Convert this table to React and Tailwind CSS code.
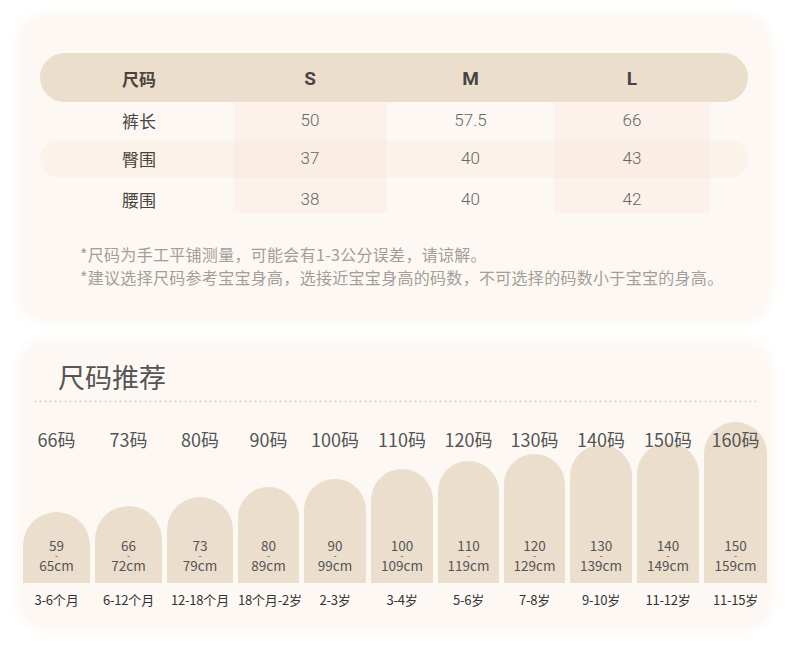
import React from "react";

const rows = [
  { label: "裤长", v: ["50", "57.5", "66"], band: false },
  { label: "臀围", v: ["37", "40", "43"], band: true },
  { label: "腰围", v: ["38", "40", "42"], band: false },
];

const sizes = [
  { s: "66码", a: "59", b: "65cm", age: "3-6个月", h: 71 },
  { s: "73码", a: "66", b: "72cm", age: "6-12个月", h: 77 },
  { s: "80码", a: "73", b: "79cm", age: "12-18个月", h: 86 },
  { s: "90码", a: "80", b: "89cm", age: "18个月-2岁", h: 96 },
  { s: "100码", a: "90", b: "99cm", age: "2-3岁", h: 104 },
  { s: "110码", a: "100", b: "109cm", age: "3-4岁", h: 114 },
  { s: "120码", a: "110", b: "119cm", age: "5-6岁", h: 122 },
  { s: "130码", a: "120", b: "129cm", age: "7-8岁", h: 129 },
  { s: "140码", a: "130", b: "139cm", age: "9-10岁", h: 138 },
  { s: "150码", a: "140", b: "149cm", age: "11-12岁", h: 140 },
  { s: "160码", a: "150", b: "159cm", age: "11-15岁", h: 161 },
];

const cjk = { fontFamily: '"Noto Sans CJK SC", "Noto Sans", sans-serif' };
const num = { fontFamily: 'Roboto, "Noto Sans CJK SC", sans-serif' };

const cols = "grid grid-cols-[67px_67px_66px_61px_62px_62px_61px_61px_62px_62px_63px] gap-x-[5px]";

export default function App() {
  return (
    <div className="w-[790px] h-[657px] bg-white pt-[15px] pl-[20px]" style={cjk}>
      {/* Top card */}
      <div className="w-[750px] h-[306px] rounded-[30px] bg-[#fdf8f3] shadow-[0_0_10px_4px_#fdf9f5] pt-[38px] pl-[20px]">
        <div className="w-[708px]">
          {/* header */}
          <div className="h-[49px] pt-[3px] rounded-full bg-[#ecdecd] flex items-center text-[#4a4440]">
            <div className="w-[193px] pl-[82px] text-[17px] font-bold">尺码</div>
            <div className="w-[154px] text-center text-[19px] font-bold" style={num}>S</div>
            <div className="w-[167px] text-center text-[19px] font-bold" style={num}>M</div>
            <div className="w-[156px] text-center text-[19px] font-bold" style={num}>L</div>
          </div>
          {rows.map((r, i) => (
            <div
              key={r.label}
              className={
                "flex items-stretch " +
                (r.band ? "rounded-full bg-[#fbf2e9] h-[38px]" : i === 2 ? "h-[35px]" : "h-[38px]")
              }
            >
              <div className={"w-[193px] pl-[82px] flex items-center text-[17px] text-[#4a4440] " + (i === 2 ? "pt-[8px]" : "")}>
                {r.label}
              </div>
              <div className={"w-[154px] flex items-center justify-center text-[17px] font-light text-[#666] bg-[#f9e9dc]/35 " + (i === 2 ? "pt-[8px]" : "")} style={num}>
                {r.v[0]}
              </div>
              <div className={"w-[167px] flex items-center justify-center text-[17px] font-light text-[#666] " + (i === 2 ? "pt-[8px]" : "")} style={num}>
                {r.v[1]}
              </div>
              <div className={"w-[156px] flex items-center justify-center text-[17px] font-light text-[#666] bg-[#f9e9dc]/35 " + (i === 2 ? "pt-[8px]" : "")} style={num}>
                {r.v[2]}
              </div>
            </div>
          ))}
        </div>
        <div className="mt-[30px] pl-[40px] text-[16px] leading-[23px] tracking-[0.3px] text-[#a39e99] whitespace-nowrap">
          <div>*尺码为手工平铺测量，可能会有1-3公分误差，请谅解。</div>
          <div>*建议选择尺码参考宝宝身高，选接近宝宝身高的码数，不可选择的码数小于宝宝的身高。</div>
        </div>
      </div>

      {/* Bottom card */}
      <div className="mt-[22px] w-[750px] h-[284px] rounded-[26px] bg-[#fdf8f3] shadow-[0_0_10px_4px_#fdf9f5] pl-[3px] pt-[16px]">
        <div className="pl-[35px] text-[27px] leading-[36px] text-[#555]">尺码推荐</div>
        <div className="ml-[10px] mt-[5px] w-[724px] h-[3px] bg-[radial-gradient(circle,#ddd5cd_0.8px,transparent_1.2px)] bg-[length:5px_3px]" />
        <div className={cols + " mt-[25px] relative z-10"}>
          {sizes.map((c) => (
            <div key={c.s} className="text-center text-[18px] leading-[22px] text-[#555] whitespace-nowrap">
              {c.s}
            </div>
          ))}
        </div>
        <div className={cols + " items-end h-[161px] mt-[-28px]"}>
          {sizes.map((c) => (
            <div
              key={c.s}
              className="rounded-t-full bg-[#ebdecd] flex flex-col items-center justify-end pb-[10px] text-[#555] text-[13.5px]"
              style={{ height: c.h }}
            >
              <div className="leading-[15px]">{c.a}</div>
              <div className="leading-[5px] h-[5px] text-[9px]">-</div>
              <div className="leading-[15px]">{c.b}</div>
            </div>
          ))}
        </div>
        <div className={cols + " mt-[8px]"}>
          {sizes.map((c) => (
            <div key={c.s} className="text-center text-[13px] leading-[18px] text-[#333] whitespace-nowrap tracking-[-0.2px]">
              {c.age}
            </div>
          ))}
        </div>
      </div>
    </div>
  );
}
